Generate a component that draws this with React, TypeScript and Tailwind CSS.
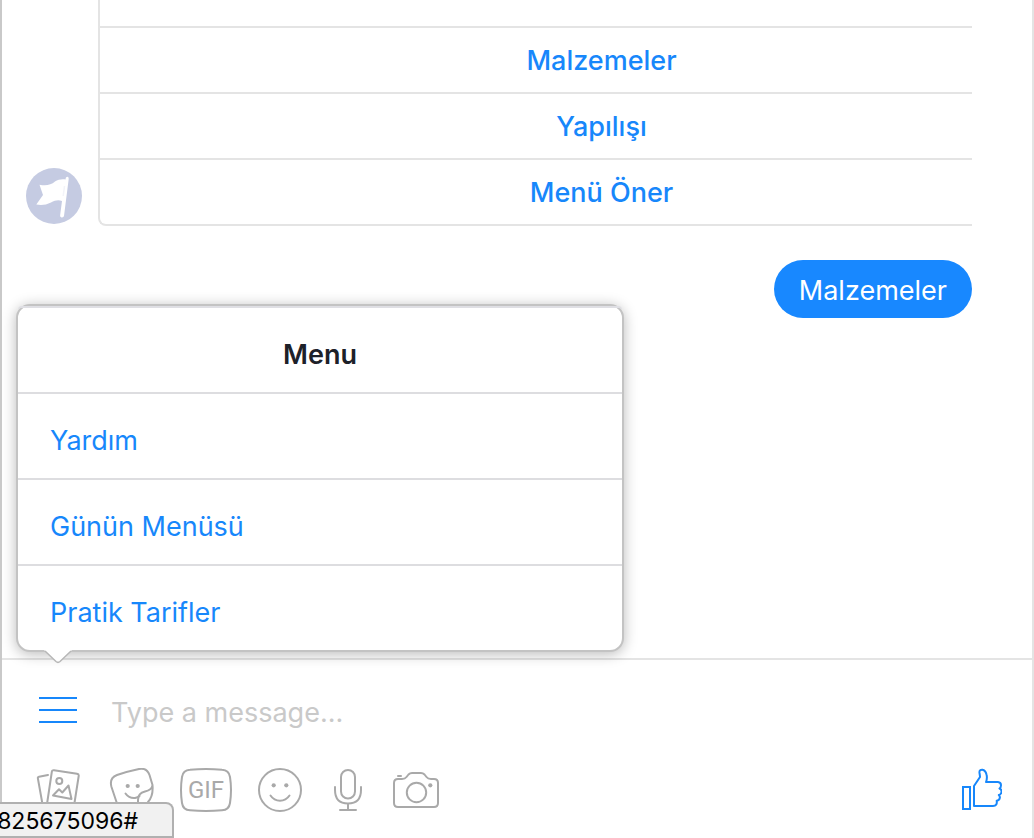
import type { ReactNode } from 'react';

const replies = ['Malzemeler', 'Yapılışı', 'Menü Öner'];
const menuItems = ['Yardım', 'Günün Menüsü', 'Pratik Tarifler'];

function Icon({ box, className, children }: { box: string; className: string; children: ReactNode }) {
  return (
    <svg
      viewBox={box}
      className={className}
      fill="none"
      stroke="currentColor"
      strokeWidth="2"
      strokeLinecap="round"
      strokeLinejoin="round"
      aria-hidden="true"
    >
      {children}
    </svg>
  );
}

function PhotosIcon() {
  return (
    <Icon box="0 0 44 44" className="h-11 w-11">
      <path d="M12 7 L3 8.7 Q1.6 9 1.9 10.5 L7 39 Q7.300 40.500 9 40.200" />
      <path d="M18 2.300 L41 5.700 Q43 6 42.700 8 L38 38 Q37.700 40 35.700 39.700 L13 36.300 Q11 36 11.300 34 L15.800 4 Q16.100 2 18 2.300Z" />
      <circle cx="23.300" cy="13" r="3" />
      <path d="M17 27.500 L23 21.200 L26.300 24.500 L32.500 17.500 L35.500 31 Z" />
    </Icon>
  );
}

function StickerIcon() {
  return (
    <Icon box="0 0 46 44" className="h-11 w-[46px]">
      <path d="M29 41 L16 42 Q10 42 8.500 37 L2.500 19 Q0 10 8 7 Q18 3.500 30 1 Q38 -0.500 40.500 7 L43.500 17 Q44.500 28 39 34 Q35 39 29 41 Q29 36 29 32 Q29 25 36 23.500 Q43 22 43.500 17" />
      <path d="M16.500 25.500 Q20 30.500 26 30 Q29 29.500 30.500 28" />
      <g fill="currentColor" stroke="none">
        <circle cx="18.700" cy="18" r="2.100" />
        <circle cx="28.700" cy="18" r="2.100" />
      </g>
    </Icon>
  );
}

function GifFrame() {
  return (
    <Icon box="0 0 52 44" className="absolute inset-0 h-11 w-[52px]">
      <path d="M10 1.700 Q26 0.300 42 1.700 Q49 2 50 9 Q52 22 50 35 Q49 42 42 42.300 Q26 43.700 10 42.300 Q3 42 2 35 Q0 22 2 9 Q3 2 10 1.700Z" />
    </Icon>
  );
}

function SmileyIcon() {
  return (
    <Icon box="0 0 44 44" className="h-11 w-11">
      <circle cx="22" cy="22" r="21" />
      <path d="M12.500 27.500 Q16 32.700 22 32.700 Q28 32.700 31.500 27.500" />
      <g fill="currentColor" stroke="none">
        <circle cx="15.700" cy="17.300" r="2.100" />
        <circle cx="28.300" cy="17.300" r="2.100" />
      </g>
    </Icon>
  );
}

function MicIcon() {
  return (
    <Icon box="0 0 30 44" className="h-11 w-[30px]">
      <rect x="8" y="2" width="14" height="28.500" rx="7" />
      <path d="M2 19 V22 Q2 35.500 15 35.500 Q28 35.500 28 22 V19 M15 36 V42 M7 42 H23" />
    </Icon>
  );
}

function CameraIcon() {
  return (
    <Icon box="0 0 46 44" className="h-11 w-[46px]">
      <path d="M5 11 H9 Q12 11 13.500 9 L15.500 6.500 Q17 5 19 5 H28 Q30 5 31.500 6.500 L33.500 9 Q35 11 38 11 H41 Q45 11 45 15 V35 Q45 39 41 39 H5 Q1 39 1 35 V15 Q1 11 5 11Z" />
      <path d="M5 8 H8" />
      <circle cx="23.500" cy="24.500" r="9.700" />
      <circle cx="37.300" cy="17.300" r="2.100" fill="currentColor" stroke="none" />
    </Icon>
  );
}

function ThumbIcon() {
  return (
    <Icon box="0 0 42 44" className="h-11 w-[42px]">
      <rect x="3" y="19" width="7" height="22" strokeLinejoin="miter" />
      <path d="M14 38 V18 L20 9 Q20 8 19.500 5 Q19 1.500 22.500 1.700 Q25.500 2.200 26.500 6.500 Q27.500 10 26 14 H38 Q41 14.300 41 17.300 Q41 19.500 39.500 20.500 Q41.800 21.500 41.500 24 Q41.200 26.500 38.800 27 Q40.500 28.500 39.500 31 Q38.800 32.500 36.700 32.800 Q37.500 38 33 38 Z" />
    </Icon>
  );
}

export default function App() {
  return (
    <div className="relative flex min-h-screen flex-col border-r-2 border-l-2 border-r-[#e4e4e4] border-l-[#c9c9c9] bg-white font-['Inter',sans-serif] text-[27px] leading-8">
      <main className="flex flex-1 flex-col pr-[60px] pl-6">
        <div className="flex items-end gap-4">
          <div className="mb-0.5 flex h-14 w-14 shrink-0 items-center justify-center rounded-full bg-[#c5cbe2]">
            <svg viewBox="0 0 56 56" className="h-14 w-14" aria-hidden="true">
              <path
                d="M13.500 16.700 C20 18 25 17 29 13.500 C32 11.500 36 11 39.500 11.500 Q39.500 8.500 41.500 8.700 Q43 9 42.700 11 L38 48 Q37.500 49.700 35.500 49.400 Q33.900 49 34.100 47.500 L36 33 C32 31.500 29 32.500 25 34.500 C20 37 15 37.500 10.300 36.500 L17 27 Z"
                fill="#fff"
              />
              <path d="M38.500 18 L37.200 28" stroke="#f3f4f9" strokeWidth="1.500" />
            </svg>
          </div>
          <div className="min-w-0 flex-1 overflow-hidden">
            <div className="w-[115%] rounded-bl-lg border-b-2 border-l-2 border-[#e4e4e4] pt-[26px]">
              {replies.map((reply) => (
                <button
                  key={reply}
                  type="button"
                  className="block h-[66px] w-full border-t-2 border-[#e4e4e4] pt-0.5 text-center font-medium text-[#1787fb]"
                >
                  {reply}
                </button>
              ))}
            </div>
          </div>
        </div>
        <p className="mt-[34px] self-end rounded-full bg-[#1888ff] px-[25px] pt-[15px] pb-[11px] text-white">Malzemeler</p>
      </main>

      <footer className="relative border-t-2 border-[#e4e4e4] pb-[26px]">
        <nav
          aria-label="Menu"
          className="absolute bottom-full left-3.5 mb-2 w-[608px] max-w-[95%] rounded-[14px] border-2 border-[#c3c3c3] bg-white shadow-[0_2px_14px_rgba(0,0,0,0.28)]"
        >
          <h2 className="h-[86px] rounded-t-sm border-t-2 border-[#dfdfe4] pt-[31px] text-center font-semibold text-[#1d2129]">
            Menu
          </h2>
          {menuItems.map((item) => (
            <a
              key={item}
              href="#"
              className="block h-[86px] border-t-2 border-[#dddde0] px-8 pt-[31px] text-[#1787fb]"
            >
              {item}
            </a>
          ))}
          <svg viewBox="0 0 28 14" className="absolute top-full left-[26px] h-3.5 w-7" aria-hidden="true">
            <path d="M0 0 L12 11.500 Q14 13.300 16 11.500 L28 0Z" fill="#fff" />
            <path d="M1 1 L12 11.500 Q14 13.300 16 11.500 L27 1" fill="none" stroke="#b7b7b7" strokeWidth="1.500" />
          </svg>
        </nav>

        <div className="flex h-[108px] items-center gap-[34px] px-[37px]">
          <button type="button" aria-label="Open menu" className="flex w-[38px] shrink-0 flex-col gap-2.5 pb-2">
            <span className="h-0.5 w-full bg-[#1787fb]" />
            <span className="h-0.5 w-full bg-[#1787fb]" />
            <span className="h-0.5 w-full bg-[#1787fb]" />
          </button>
          <input
            type="text"
            aria-label="Message"
            placeholder="Type a message..."
            className="min-w-0 flex-1 bg-transparent pb-0.5 outline-none placeholder:text-[#c9c9c9]"
          />
        </div>

        <div className="flex h-11 items-center pr-[30px] pl-[34px] text-[#a9a9a9]">
          <button type="button" aria-label="Add photos"><PhotosIcon /></button>
          <button type="button" aria-label="Choose a sticker" className="ml-[29px]"><StickerIcon /></button>
          <button type="button" className="relative ml-[25px] h-11 w-[52px] font-['Roboto',sans-serif] text-2xl">
            <GifFrame />
            GIF
          </button>
          <button type="button" aria-label="Choose an emoji" className="ml-[26px]"><SmileyIcon /></button>
          <button type="button" aria-label="Record audio" className="ml-[31px]"><MicIcon /></button>
          <button type="button" aria-label="Take a photo" className="ml-[30px]"><CameraIcon /></button>
          <button type="button" aria-label="Send a like" className="ml-auto text-[#1787fb]"><ThumbIcon /></button>
        </div>
      </footer>

      <div className="absolute bottom-0 -left-0.5 flex h-9 w-[174px] items-center justify-end overflow-hidden rounded-tr-lg border-t-2 border-r-2 border-b-2 border-[#b0b0b0] bg-[#f1f1f1] pt-0.5 pr-[34px] text-[23px] text-black">
        825675096#
      </div>
    </div>
  );
}
